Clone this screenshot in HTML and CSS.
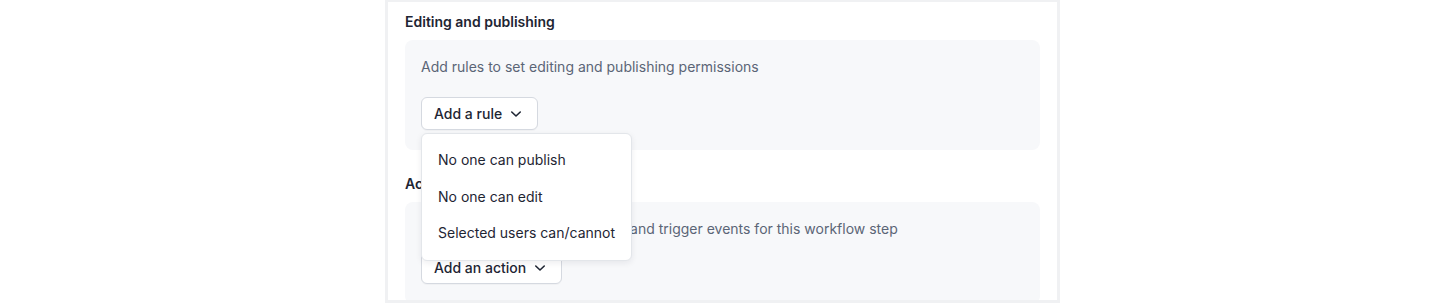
FILE: index.html
```html
<!DOCTYPE html>
<html lang="en">
<head>
  <meta charset="UTF-8" />
  <title>Workflow step</title>
  <link rel="stylesheet" href="styles.css">
</head>
<body>
  <div class="panel">
    <!-- Editing rules -->
    <section class="group">
      <h3>Editing and publishing</h3>
      <div class="group-box">
        <p>Add rules to set editing and publishing permissions</p>
        <div class="menu-wrap">
          <button class="menu-btn" type="button">
            Add a rule
            <svg width="12" height="12" viewBox="0 0 12 12" fill="none"><path d="M1.75 4L6 8L10.25 4" stroke="currentColor" stroke-width="1.6" stroke-linecap="round" stroke-linejoin="round"/></svg>
          </button>
          <ul class="menu">
            <li>No one can publish</li>
            <li>No one can edit</li>
            <li>Selected users can/cannot</li>
          </ul>
        </div>
      </div>
    </section>

    <!-- Actions -->
    <section class="group">
      <h3>Actions</h3>
      <div class="group-box group-box--actions">
        <p>Add actions to notify reviewers and trigger events for this workflow step</p>
        <button class="menu-btn" type="button">
          Add an action
          <svg width="12" height="12" viewBox="0 0 12 12" fill="none"><path d="M1.75 4L6 8L10.25 4" stroke="currentColor" stroke-width="1.6" stroke-linecap="round" stroke-linejoin="round"/></svg>
        </button>
      </div>
    </section>
  </div>
</body>
</html>
```

FILE: styles.css
```css
:root {
  --text: #1e2533;
  --muted: #5b6576;
  --box: #f7f8fa;
  --line: #d5d9e0;
  --frame: #f0f1f3;
}

html, body {
  margin: 0;
  padding: 0;
  background: #fff;
  font-family: Inter, "Noto Sans", sans-serif;
  color: var(--text);
}

.panel {
  width: 675px;
  height: 303px;
  margin-left: calc(50% - 335px);
  border: 3px solid var(--frame);
  border-top-width: 2px;
  padding: 10px 17px 0;
  box-sizing: border-box;
  overflow: hidden;
}

.group h3 {
  margin: 0 0 8px;
  font-size: 14px;
  line-height: 20px;
  font-weight: 600;
}

.group + .group {
  margin-top: 24px;
}

.group-box {
  background: var(--box);
  border-radius: 8px;
  padding: 17px 16px 20px;
}

.group-box p {
  margin: 0 0 20px;
  font-size: 14px;
  line-height: 20px;
  color: var(--muted);
}

.group-box--actions p {
  margin-bottom: 12px;
}

.menu-wrap {
  position: relative;
  display: inline-block;
}

.menu-btn {
  display: inline-flex;
  align-items: center;
  gap: 8px;
  height: 33px;
  padding: 0 15px 0 12px;
  background: #fff;
  border: 1px solid var(--line);
  border-radius: 6px;
  font-family: inherit;
  font-size: 14px;
  font-weight: 500;
  color: var(--text);
  box-shadow: 0 1px 1px rgba(0, 0, 0, 0.03);
}

.menu-btn svg {
  margin-top: 1px;
}

.menu {
  position: absolute;
  top: 36px;
  left: 0;
  z-index: 5;
  margin: 0;
  padding: 8px 0;
  list-style: none;
  background: #fff;
  border: 1px solid #e3e6ea;
  border-radius: 6px;
  box-shadow: 0 2px 6px rgba(20, 30, 50, 0.08);
  white-space: nowrap;
}

.menu li {
  padding: 8px 16px;
  font-size: 14px;
  line-height: 20.5px;
  color: var(--text);
}
```
